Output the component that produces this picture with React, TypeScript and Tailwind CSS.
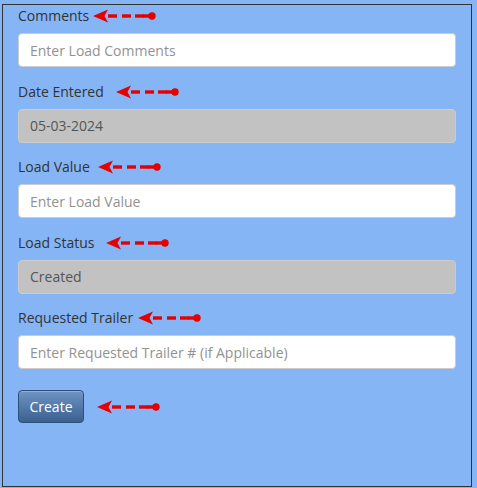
import React from "react";

interface FieldProps {
  label: string;
  placeholder?: string;
  value?: string;
  disabled?: boolean;
  arrowGap: string;
}

// red dashed pointer drawn next to each label
const Pointer = ({ className }: { className: string }) => (
  <svg width="64" height="14" viewBox="0 0 64 14" className={className}>
    <polygon points="0,7 15,0.5 11.5,7 15,13.5" fill="#e60000" />
    <rect x="15" y="5.3" width="9" height="3.4" fill="#e60000" />
    <rect x="29" y="5.3" width="9" height="3.4" fill="#e60000" />
    <rect x="42" y="5.3" width="9" height="3.4" fill="#e60000" />
    <rect x="50" y="5.3" width="8" height="3.4" fill="#e60000" />
    <circle cx="59" cy="7" r="3.7" fill="#e60000" />
  </svg>
);

const Field = ({ label, placeholder, value, disabled, arrowGap }: FieldProps) => (
  <div className="mb-[14.5px]">
    <div className="flex items-center h-5 mb-[7px]">
      <label className="text-[14px] leading-5 text-[#333]">{label}</label>
      <Pointer className={arrowGap} />
    </div>
    <input
      type="text"
      placeholder={placeholder}
      defaultValue={value}
      disabled={disabled}
      className={
        "block w-full h-[34px] px-[11px] text-[14px] rounded-[4px] border border-[#ccc] outline-none placeholder:text-[#929292] " +
        (disabled ? "bg-[#c2c2c2] text-[#555]" : "bg-white text-[#555]")
      }
    />
  </div>
);

export default function App() {
  return (
    <div
      className="w-[477px] h-[488px] bg-[#86b5f6] pl-[2px] pt-[4px]"
      style={{ fontFamily: '"Open Sans", "Noto Sans", sans-serif' }}
    >
      <div className="w-[470px] h-[483px] border border-[#333] px-[15px] pt-[1px]">
        <Field label="Comments" placeholder="Enter Load Comments" arrowGap="ml-[4px]" />
        <Field label="Date Entered" value="05-03-2024" disabled arrowGap="ml-[12px]" />
        <Field label="Load Value" placeholder="Enter Load Value" arrowGap="ml-[8px]" />
        <Field label="Load Status" value="Created" disabled arrowGap="ml-[12px]" />
        <Field
          label="Requested Trailer"
          placeholder="Enter Requested Trailer # (if Applicable)"
          arrowGap="ml-[5px]"
        />

        {/* submit */}
        <div className="flex items-center mt-[21px]">
          <button className="w-[66px] h-[33px] rounded-[4px] border border-[#2c4f7c] bg-gradient-to-b from-[#6d94c2] to-[#3a6190] text-white text-[14px] shadow-[inset_0_1px_0_rgba(255,255,255,0.25)]">
            Create
          </button>
          <Pointer className="ml-[13px]" />
        </div>
      </div>
    </div>
  );
}
